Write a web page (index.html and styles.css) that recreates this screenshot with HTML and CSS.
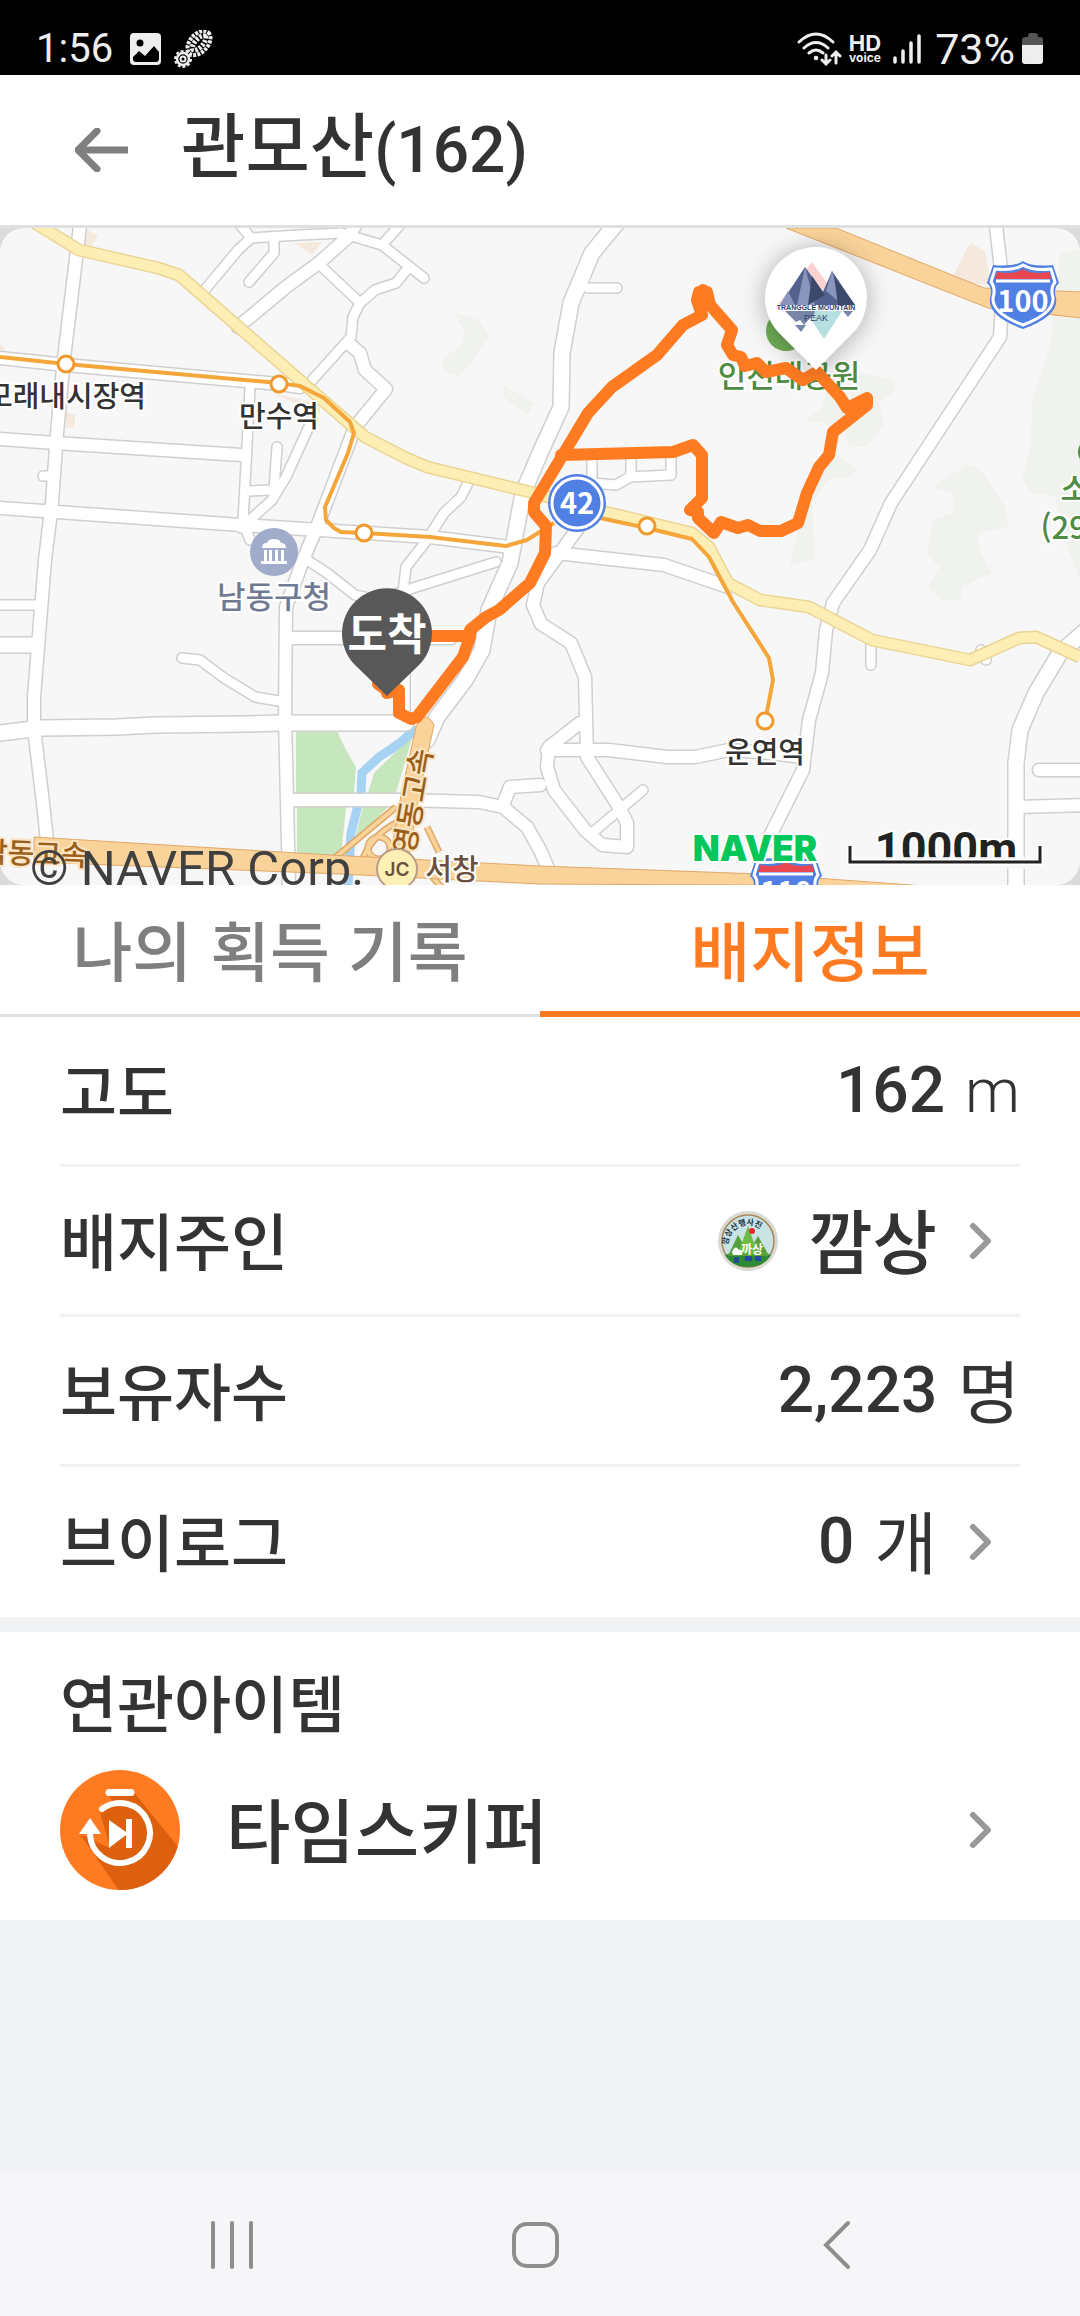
FILE: index.html
```html
<!DOCTYPE html>
<html lang="ko">
<head>
<meta charset="utf-8">
<meta name="viewport" content="width=device-width, initial-scale=1">
<title>관모산(162)</title>
<link rel="stylesheet" href="styles.css">
</head>
<body>
<div class="screen">
  <div class="status">
    <span>1:56</span>
    <svg class="status-photo" width="32" height="32" viewBox="0 0 32 32"><rect width="31" height="32" rx="4" fill="#eee"/><circle cx="10" cy="10" r="3.500"/><path d="M3 24l6-6 6 5 9-10 5 6v6q0 4-3 4H6q-3 0-3-3z"/></svg>
    <svg class="status-boot" width="40" height="38" viewBox="0 0 40 38" fill="none" stroke="#eee"><ellipse cx="25" cy="13" rx="14" ry="9" transform="rotate(-48 25 13)" stroke-width="4" stroke-dasharray="3 1.200"/><ellipse cx="25" cy="13" rx="9" ry="4" transform="rotate(-48 25 13)" stroke-width="5" stroke-dasharray="2.500 1.500"/><circle cx="9" cy="29" r="6" stroke-width="2.500"/><circle cx="9" cy="29" r="8" stroke-width="2" stroke-dasharray="3 2"/><circle cx="9" cy="29" r="2.500" stroke-width="2"/></svg>
    <span class="spacer"></span>
    <svg class="status-wifi" width="46" height="36" viewBox="0 0 46 36" fill="none" stroke="#eee" stroke-width="3" stroke-linecap="round"><path d="M2 11Q19-5 36 11M7 17Q19 6 31 17M12 22Q19 16 26 22M29 24v9m-4-4l4 4 4-4M39 32v-11m-4 4l4-4 4 4"/><circle cx="19" cy="27" r="2.300" fill="#eee" stroke="none"/></svg>
    <span class="voice"><b>HD</b><small>voice</small></span>
    <svg class="status-signal" width="28" height="32" viewBox="0 0 28 32" fill="none" stroke="#eee" stroke-width="3.500" stroke-linecap="round"><path d="M2 25v4M10 18v11M18 10v19M26 3v26"/></svg>
    <span class="percent">73%</span>
    <svg class="status-battery" width="22" height="32" viewBox="0 0 22 32"><path d="M6 3q0-3 3-3h4q3 0 3 3v1h2q3 0 3 3v6H0V7q0-3 3-3h3z" fill="#555"/><path d="M0 12h21v16q0 3-3 3H3q-3 0-3-3z" fill="#eee"/></svg>
  </div>

  <header class="header">
    <button class="back" aria-label="뒤로"><svg width="54" height="44" viewBox="0 0 54 44" fill="none" stroke="#7f7f7f" stroke-width="7"><path d="M53 22H5"/><path d="M22 3L3 22l19 19" stroke-linecap="round" stroke-linejoin="round"/></svg></button>
    <h1 class="title">관모산<span class="num">(162)</span></h1>
  </header>

  <div class="map">
    <svg class="map-canvas" viewBox="0 228 1080 657" role="img" aria-label="지도">
      <defs>
        <g id="roads-s">
          <path d="M241 226L251 238"/><path d="M203 292L238 250 251 238 300 235 341 233 382 245 424 278"/>
          <path d="M274 240v13L249 282"/><path d="M319 264L360 303 353 317 351 337 306 387"/><path d="M360 303L375 290 396 283 408 268"/><path d="M382 245L399 226"/>
          <path d="M250 388L243 522 250 540"/><path d="M312 420L286 477 272 500 241 528"/><path d="M277 447L274 490 248 491"/>
          <path d="M468 483L461 497 444 513 427 540 406 567 403 592"/><path d="M182 658L200 660 224 678 255 697 285 702"/>
          <path d="M0 605H38"/><path d="M405 640V723"/><path d="M304 558L327 573 355 595 379 600 413 588 496 562"/>
          <path d="M592 458V483L616 485 630 477 671 475V458"/><path d="M631 458V476"/><path d="M588 288H617"/><path d="M592 833L643 790"/>
          <path d="M871 645V665"/><path d="M981 650L986 660"/><path d="M47 476H43"/>
        </g>
        <g id="roads-m">
          <path d="M80 226L64 358 57 433 52 503 45 560 34 697 34 728 43 803 48 850"/>
          <path d="M0 358L66 365 279 384 300 387"/><path d="M0 439L55 443 241 455"/><path d="M0 508L241 525 320 530 430 537 510 547"/>
          <path d="M238 327L286 287 320 262 348 237 355 226"/>
          <path d="M348 343L360 353 365 370 386 389 355 427 317 527 303 560 286 607 285 717 289 887"/>
          <path d="M289 638H451"/><path d="M293 800H403L479 802 503 807 527 827 540 850 547 866"/><path d="M503 805L510 787 540 785"/>
          <path d="M578 528L560 553 538 583 533 605 541 624 571 643 585 677 587 757 619 807 627 823 627 847 602 845 585 830 554 790 547 767 549 747 580 723"/>
          <path d="M556 553L664 565 728 587"/><path d="M547 750H609L667 757 695 757 729 750 760 752 803 757"/>
          <path d="M996 226L1003 287 1000 337 891 503 870 550 833 603 826 630 822 673 809 720 803 770 768 840"/>
          <path d="M1090 770H1039"/><path d="M1018 807L1090 805"/>
        </g>
        <g id="roads-l">
          <path d="M0 645H32"/><path d="M0 733L41 728 117 727 155 725 248 724 282 723 406 723"/>
          <path d="M616 224L592 253 571 303 562 353 561 407 540 453 523 493 510 563 489 610 482 650 465 680 437 717 427 740"/>
          <path d="M1090 627L1060 653 1036 693 1020 730 1016 763V890"/>
        </g>
        <path id="yellow-road" d="M30 220L79 250 158 268 179 275 365 437 406 458 427 467 530 492 605 512 692 533 709 547 728 583 760 600 809 607 872 640 970 660 1019 638 1036 637 1080 657"/>
        <g id="ramps"><path d="M396 807L330 862"/><path d="M398 822Q370 835 360 866"/><path d="M427 827L439 852"/><path d="M428 872L444 890"/><circle cx="379" cy="848" r="11"/></g>
        <g id="shield">
          <path d="M0-35Q-8-29-30-31L-36-13Q-30-8-33 2Q-36 20 0 33Q36 20 33 2Q30-8 36-13L30-31Q8-29 0-35Z" fill="#5180e4"/>
          <path d="M0-31Q-9-25-28-27L-32-14Q-27-8-30 2Q-31 17 0 29Q31 17 30 2Q27-8 32-14L28-27Q9-25 0-31Z" fill="none" stroke="#fff" stroke-width="3"/>
          <path d="M-28-17l2-7Q-9-21 0-27Q9-21 26-24l2 7z" fill="#e9474f"/><path d="M-27-15H27" stroke="#fff" stroke-width="3"/>
        </g>
      </defs>
      <rect y="228" width="1080" height="657" fill="#f7f7f7"/>
      <g class="hills">
        <path d="M455 313L479 320 489 338 460 377 442 370 444 357 461 347 465 333ZM504 385L534 403 527 415 504 397Z"/>
        <path d="M830 376L860 373 895 380 895 390 879 403 884 423 867 447 850 447 843 427 805 420 822 407ZM836 453L857 470 850 477 829 480 812 503 815 560 790 565 805 500Z"/>
        <path d="M1060 253L1080 250V580L1065 540 1056 497 1032 493 1022 477 1031 447 1032 403 1050 347Z"/>
        <path d="M967 465L981 470 1005 507 1008 527 977 533 981 553 991 573 962 587 960 600 941 600 929 587 939 567 927 553 933 520 953 513 953 493 933 487Z"/>
      </g>
      <path class="blocks" d="M85 228l13 8-8 12-6-3zM294 243l28-1-10 13zM970 243l15 8 6 33h-42zM66 412l9 3v12l-9 1zM0 344l6 5-6 2zM270 392l50 12v10z"/>
      <g class="park"><path d="M296 731H337Q345 750 356 767L354 793H296ZM413 735L396 793H368L374 773ZM297 807H346L341 856 297 853ZM363 807H388L354 842Z"/></g>
      <path class="river" d="M417 727Q405 741 379 757L362 773 361 793 351 833 348 887"/>
      <g class="casing">
        <use href="#roads-s" stroke-width="12"/><use href="#roads-m" stroke-width="15"/><use href="#roads-l" stroke-width="18"/>
      </g>
      <g class="paving">
        <use href="#roads-s" stroke-width="9"/><use href="#roads-m" stroke-width="12"/><use href="#roads-l" stroke-width="15"/>
      </g>
      <use class="yellow-edge" href="#yellow-road"/><use class="yellow-fill" href="#yellow-road"/>
      <use href="#ramps" class="ramp-edge"/><use href="#ramps" class="ramp-fill"/>
      <g class="highway">
        <path d="M786 228H836L984 288 1082 292V318L988 308Z"/>
        <path d="M34 837L330 855 540 866 760 874 925 886 540 884 340 874 34 862Z"/>
        <path d="M416 727Q425 708 434 725L420 790 407 868H388L402 790Z"/>
      </g>
      <path class="subway" d="M0 357L66 364 279 383 300 386 324 398 350 422 354 433 348 453 325 507 326 520 334 528 341 532 364 533 430 537 506 546 527 540 554 523M600 518L647 528 692 539 709 557 733 602 769 658 773 680 766 717"/>
      <g class="station"><circle cx="66" cy="364" r="8"/><circle cx="279" cy="384" r="8"/><circle cx="364" cy="533" r="8"/><circle cx="647" cy="526" r="8"/><circle cx="765" cy="721" r="8"/></g>

      <circle cx="274" cy="552" r="24" fill="#a1accb"/>
      <path d="M262 548q0-5 5-5 1-4 7-4t7 4q5 0 5 5zM264 550h3v11h-3zM269 550h3v11h-3zM275 550h3v11h-3zM281 550h3v11h-3zM261 561h26v3h-26z" fill="#fff"/>

      <g class="label">
        <text x="66" y="407">모래내시장역</text><text x="279" y="427">만수역</text><text x="765" y="763">운연역</text>
      </g>
      <text class="label label-office" x="274" y="608">남동구청</text>
      <circle cx="786" cy="331" r="20" fill="#6fae56"/>
      <g class="label label-park"><text x="789" y="387">인천대공원</text><text x="1089" y="500">소래</text><text x="1078" y="539">(299)</text><circle cx="1092" cy="452" r="14" stroke="none"/></g>
      <text class="label label-road" transform="translate(34 864) rotate(2)">남동고속</text>
      <text class="label label-road" transform="translate(423 803) rotate(-80)">영동고속</text>
      <circle cx="397" cy="869" r="20" fill="#fdf0b4" stroke="#b79d88" stroke-width="2"/>
      <text class="junction" x="397" y="876">JC</text>
      <text class="label label-exit" x="452" y="880">서창</text>

      <use href="#shield" x="1023" y="296"/><text class="shield-text" x="1023" y="312">100</text>
      <use href="#shield" x="786" y="889"/><text class="shield-text" x="786" y="903">110</text>

      <path class="track" d="M387 693L399 690V713L411 719 417 717 463 657 470 637V630L486 617 499 610 530 583 545 553 546 526 534 512V503L564 453 588 413 612 387 657 355 683 325 702 315 697 300 699 292H707L710 305 732 330 727 345 733 355 741 357 745 366 757 363 766 372 786 368 803 380 817 372 840 397 847 408 867 398V405L833 432 829 455 819 467 807 493 798 523 781 531H760L748 525 738 528 721 522 714 533 698 518V512L690 510 702 498V455L693 445 673 452 561 455M430 636H470M378 684L387 690M703 290V305"/>
      <circle cx="577" cy="503" r="29" fill="#5180e4"/><circle cx="577" cy="503" r="25" fill="none" stroke="#fff" stroke-width="3"/><text class="shield-text" x="577" y="514">42</text>

      <path d="M387 696L355 665A45 45 0 1 1 419 665Z" fill="#585858"/>
      <text class="finish" x="387" y="650">도착</text>

      <path class="peak-pin" d="M816 370L779 333A51 51 0 1 1 853 333Z"/>
      <path d="M778 304L812 262 842 304Z" fill="#fbd2d0"/>
      <path d="M780 305L805 267 823 292 832 271 855 305Z" fill="#53618f"/>
      <path d="M805 267L797 305 815 305ZM832 271L826 291 843 305ZM788 291L795 305 780 305Z" fill="#8995bd"/><path d="M812 276L808 305 825 295ZM834 276L838 305 855 305Z" fill="#3c486c"/>
      <path d="M785 311H823L817 325 812 316 804 325 800 320 796 322ZM795 325h11l-5 7zM843 311h10l-5 6z" fill="#7884a8"/>
      <path d="M815 311H842L824 339 812 321Z" fill="#b5dfe0"/>
      <text class="peak-name" x="816" y="310">TRANGGLE MOUNTAIN</text><text class="peak-name peak-word" x="816" y="321">PEAK</text>

      <text class="copyright" x="30" y="885">© NAVER Corp.</text>
      <text class="naver" x="755" y="861">NAVER</text>
      <text class="distance" x="946" y="864">1000m</text>
      <path d="M848 857H1042V869H848Z" fill="#f7f7f7" opacity=".850"/>
      <path class="scale-halo" d="M850 846V862H1040V846"/><path class="scale" d="M850 846V862H1040V846"/>
    </svg>
  </div>

  <nav class="tabs">
    <button class="tab">나의 획득 기록</button>
    <button class="tab tab-active" aria-current="true">배지정보</button>
  </nav>

  <main>
    <dl class="rows">
      <div class="row"><dt>고도</dt><dd><span class="num">162</span><span class="unit unit-latin">m</span></dd></div>
      <div class="row row-link"><dt>배지주인</dt><dd>
        <svg class="avatar" width="60" height="60" viewBox="0 0 60 60"><circle cx="30" cy="30" r="30" fill="#d9dad2"/><circle cx="30" cy="30" r="26" fill="#c9e3e4" stroke="#a98759" stroke-width="1.500"/><path id="arc" d="M10 34A20 20 0 0 1 50 34" fill="none"/><text class="avatar-arc"><textPath href="#arc">깜상산행사진</textPath></text><path d="M7 44Q30 36 53 44Q46 56 30 56T7 44Z" fill="#2e8a35"/><path d="M20 24L32 45H10ZM40 25L51 45H29Z" fill="#56a03a"/><path d="M30 15L40 43H20Z" fill="#6dba45"/><circle cx="34" cy="20" r="3" fill="#e32b25"/><path d="M16 46h5v6h-5zM27 45h7v5h-7zM37 45h6v5h-6z" fill="#244aa0"/><path d="M14 41q3-7 6-3l4 2v4H15z" fill="#fff"/><text class="avatar-name" x="34" y="43">까상</text></svg>
        <span class="owner">깜상</span><a class="chevron" href="#owner" aria-label="배지주인 보기"><svg width="24" height="40" viewBox="0 0 24 40"><path d="M4 5l15 15L4 35"/></svg></a></dd></div>
      <div class="row"><dt>보유자수</dt><dd><span class="num">2,223</span><span class="unit">명</span></dd></div>
      <div class="row row-link"><dt>브이로그</dt><dd><span class="num">0</span><span class="unit">개</span><a class="chevron" href="#vlog" aria-label="브이로그 보기"><svg width="24" height="40" viewBox="0 0 24 40"><path d="M4 5l15 15L4 35"/></svg></a></dd></div>
    </dl>

    <section class="items">
      <h2>연관아이템</h2>
      <a class="item" href="#item">
        <svg width="120" height="120" viewBox="0 0 120 120">
          <defs><clipPath id="disc"><circle cx="60" cy="60" r="60"/></clipPath></defs>
          <circle cx="60" cy="60" r="60" fill="#ff7b22"/>
          <path clip-path="url(#disc)" d="M48 24L72 20 120 79V125H62L20 64 50 78 40 42 54 34Z" fill="#dd600e"/>
          <path d="M49 22.500H71" stroke="#fff" stroke-width="7" stroke-linecap="round"/>
          <path d="M42 39A30 30 0 1 1 30 64" fill="none" stroke="#fff" stroke-width="6" stroke-linecap="round"/>
          <path d="M30 48L41 64H19ZM49 50L66 62V49H72V78H66V65L49 78Z" fill="#fff"/>
        </svg>
        <span class="item-name">타임스키퍼</span>
        <span class="chevron"><svg width="24" height="40" viewBox="0 0 24 40"><path d="M4 5l15 15L4 35"/></svg></span>
      </a>
    </section>
  </main>

  <nav class="system">
    <button aria-label="최근 앱"><svg width="48" height="50" viewBox="0 0 48 50"><path d="M5 3v44M24 3v44M43 3v44"/></svg></button>
    <button aria-label="홈"><svg width="48" height="50" viewBox="0 0 48 50"><rect x="3" y="4" width="43" height="42" rx="13"/></svg></button>
    <button aria-label="뒤로"><svg width="48" height="50" viewBox="0 0 48 50"><path d="M34 3L12 25l22 22"/></svg></button>
  </nav>
</div>
</body>
</html>
```
FILE: styles.css
```css
* { box-sizing: border-box; }
body {
  margin: 0;
  background: #f0f2f4;
  color: #333;
  font-family: "Noto Sans CJK KR", "Noto Sans", sans-serif;
  font-weight: 500;
}
button {
  margin: 0;
  padding: 0;
  border: 0;
  background: none;
  color: inherit;
  font: inherit;
}
svg { display: block; flex: none; }
a { color: inherit; text-decoration: none; }
.screen { display: flex; flex-direction: column; min-height: 100vh; }

.status {
  display: flex;
  align-items: center;
  height: 75px;
  padding: 22px 36px 0;
  background: #000;
  color: #eee;
  font: 400 40px/52px Roboto, sans-serif;
}
.spacer { flex: 1; }
.status-photo { margin-left: 17px; }
.status-boot { margin-left: 12px; }
.voice {
  display: flex;
  flex-direction: column;
  align-items: center;
  margin: 0 12px 0 6px;
}
.voice b { font: 700 22px/18px Inter, sans-serif; }
.voice small { font: 700 12px/12px Inter, sans-serif; }
.status-signal { margin-right: 14px; }
.percent { font-size: 43px; }
.status-battery { margin-left: 7px; }

.header {
  display: flex;
  align-items: center;
  gap: 52px;
  height: 153px;
  padding: 0 75px;
  border-bottom: 3px solid #e0e0e0;
  background: #fff;
}
.title { margin: 0; padding-bottom: 8px; font-size: 70px; font-weight: 500; line-height: 80px; }
.num { font-family: Roboto, sans-serif; font-size: 64px; font-weight: 500; line-height: 80px; }

.map { background: #dadada; overflow: hidden; }
.map-canvas { width: 100%; height: auto; border-radius: 24px; font-family: "Noto Sans CJK KR", sans-serif; }
.hills { fill: #f0f2ed; }
.blocks { fill: #f5e9de; }
.park { fill: #c6e6bd; }
.river { fill: none; stroke: #a6d3f3; stroke-width: 9; }
.casing, .paving { fill: none; stroke-linecap: round; stroke-linejoin: round; }
.casing { stroke: #cfcfcf; }
.paving { stroke: #fff; }
.yellow-edge, .yellow-fill { fill: none; stroke-linejoin: round; }
.yellow-edge { stroke: #ebd594; stroke-width: 13; }
.yellow-fill { stroke: #fdeeb5; stroke-width: 10; }
.ramp-edge, .ramp-fill { fill: none; }
.ramp-edge { stroke: #e0a869; stroke-width: 7; }
.ramp-fill { stroke: #f9d399; stroke-width: 4; }
.highway { fill: #f9d399; stroke: #e0a869; stroke-width: 1; }
.subway { fill: none; stroke: #f5a63b; stroke-width: 4; stroke-linejoin: round; }
.station { fill: #fff; stroke: #f09a2e; stroke-width: 3; }
.label {
  fill: #333;
  stroke: #fff;
  stroke-width: 4px;
  stroke-linejoin: round;
  paint-order: stroke;
  font-size: 29px;
  font-weight: 500;
  text-anchor: middle;
}
.label-office { fill: #707a92; font-size: 31px; }
.label-park { fill: #4d8c42; font-size: 31px; }
.label-road { fill: #9a5f1a; stroke: #fbe5c3; }
.label-exit { fill: #6b5040; }
.junction { fill: #6b5040; font: 600 19px Inter, sans-serif; text-anchor: middle; }
.shield-text { fill: #fff; font: 700 29px "Noto Sans CJK KR", sans-serif; text-anchor: middle; }
.track { fill: none; stroke: #ff7b22; stroke-width: 12; stroke-linejoin: round; stroke-linecap: round; }
.finish { fill: #fff; font-size: 43px; font-weight: 700; text-anchor: middle; }
.peak-pin { fill: #fff; filter: drop-shadow(0 2px 12px rgba(0, 0, 0, .3)); }
.peak-name { fill: #2f3f6c; font: 700 7px "Liberation Sans", sans-serif; text-anchor: middle; }
.peak-word { font-size: 9px; font-weight: 400; }
.copyright { fill: #404040; font: 400 49px Roboto, sans-serif; }
.naver {
  fill: #03c75a;
  stroke: #fff;
  stroke-width: 4px;
  paint-order: stroke;
  font: 900 35px Inter, sans-serif;
  text-anchor: middle;
}
.distance { fill: #222; font: 700 45px Roboto, sans-serif; text-anchor: middle; stroke: #fff; stroke-width: 4px; paint-order: stroke; }
.scale, .scale-halo { fill: none; }
.scale { stroke: #222; stroke-width: 3; }
.scale-halo { stroke: #fff; stroke-width: 7; }

.tabs { display: grid; grid-template-columns: 1fr 1fr; background: #fff; }
.tab {
  height: 132px;
  padding-bottom: 3px;
  border-bottom: 3px solid #e0e0e0;
  color: #7f7f7f;
  font-size: 65px;
  line-height: 80px;
}
.tab-active { padding-bottom: 0; border-bottom: 6px solid #ff7b22; color: #ff7b22; }

.rows { margin: 0; padding: 0 60px; background: #fff; }
.row {
  display: flex;
  align-items: center;
  justify-content: space-between;
  height: 150px;
  border-bottom: 3px solid #f0f2f4;
}
.row:last-child { border-bottom: 0; }
dt { padding-bottom: 4px; font-size: 62px; line-height: 80px; }
dd { display: flex; align-items: center; margin: 0; }
.unit { margin-left: 20px; padding-bottom: 4px; font-size: 68px; font-weight: 400; line-height: 80px; }
.unit-latin { padding-bottom: 0; font-family: Roboto, sans-serif; font-size: 62px; font-weight: 300; }
.avatar { margin-right: 30px; }
.avatar-arc { font-size: 8px; font-weight: 700; fill: #234; }
.avatar-name { font-size: 12px; font-weight: 700; fill: #fff; text-anchor: middle; }
.owner, .item-name { padding-bottom: 4px; font-size: 70px; line-height: 80px; }
.chevron { margin: 0 27px 0 32px; }
.chevron path { fill: none; stroke: #999; stroke-width: 6; stroke-linecap: round; stroke-linejoin: round; }

.items { margin-top: 15px; padding: 27px 60px 30px; background: #fff; }
h2 { margin: 0; font-size: 62px; font-weight: 500; line-height: 84px; }
.item { display: flex; align-items: center; margin-top: 27px; }
.item-name { flex: 1; margin-left: 46px; }

.system {
  display: grid;
  grid-template-columns: repeat(3, 1fr);
  height: 144px;
  margin-top: auto;
  padding: 2px 90px 0 80px;
  background: #f6f6f8;
}
.system button { display: grid; place-items: center; }
.system svg { fill: none; stroke: #8e8e8e; stroke-width: 4; stroke-linecap: round; }
```
